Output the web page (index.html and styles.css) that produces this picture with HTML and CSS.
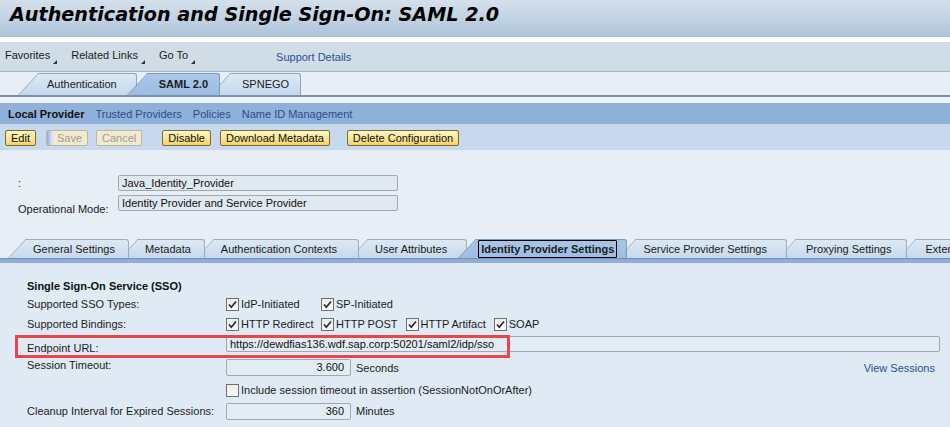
FILE: index.html
```html
<!DOCTYPE html>
<html lang="en">
<head>
<meta charset="utf-8">
<title>Authentication and Single Sign-On: SAML 2.0</title>
<link rel="stylesheet" href="styles.css">
</head>
<body>
<div class="titlebar"><h1>Authentication and Single Sign-On: SAML 2.0</h1></div>
<div class="sep"></div>
<div class="toolbar">
  <span class="menu">Favorites<i class="tri"></i></span>
  <span class="menu">Related Links<i class="tri"></i></span>
  <span class="menu">Go To<i class="tri"></i></span>
  <span class="link support">Support Details</span>
</div>
<div class="tabstrip-top">
  <div class="tab ttab first">Authentication</div>
  <div class="tab ttab sel">SAML 2.0</div>
  <div class="tab ttab">SPNEGO</div>
</div>
<div class="gap"></div>
<div class="subnav">
  <span class="cur">Local Provider</span>
  <span class="link">Trusted Providers</span>
  <span class="link">Policies</span>
  <span class="link">Name ID Management</span>
</div>
<div class="buttons">
  <span class="btn">Edit</span>
  <span class="btn dis focus m10">Save</span>
  <span class="btn dis m8">Cancel</span>
  <span class="btn m20">Disable</span>
  <span class="btn m9">Download Metadata</span>
  <span class="btn m17">Delete Configuration</span>
</div>
<div class="main">
  <div class="fields">
    <span class="flabel">:</span>
    <span class="input top">Java_Identity_Provider</span>
    <span class="flabel low">Operational Mode:</span>
    <span class="input top">Identity Provider and Service Provider</span>
  </div>
  <div class="tabstrip-inner">
    <div class="tab itab">General Settings</div>
    <div class="tab itab">Metadata</div>
    <div class="tab itab pr22">Authentication Contexts</div>
    <div class="tab itab pr20">User Attributes</div>
    <div class="tab itab sel"><span class="focusbox">Identity Provider Settings</span></div>
    <div class="tab itab pr20">Service Provider Settings</div>
    <div class="tab itab pl28">Proxying Settings</div>
    <div class="tab itab pl28">Extensions</div>
  </div>
  <div class="tabbar"></div>
  <div class="panel">
    <div class="section-title">Single Sign-On Service (SSO)</div>
    <div class="row r-types">
      <span class="label">Supported SSO Types:</span>
      <span class="chk first"><i class="box"><svg viewBox="0 0 13 13" width="13" height="13"><path d="M3 6.5 L5.3 9.2 L10 3.5" fill="none" stroke="#2b2b2b" stroke-width="1.7"/></svg></i>IdP-Initiated</span>
      <span class="chk"><i class="box"><svg viewBox="0 0 13 13" width="13" height="13"><path d="M3 6.5 L5.3 9.2 L10 3.5" fill="none" stroke="#2b2b2b" stroke-width="1.7"/></svg></i>SP-Initiated</span>
    </div>
    <div class="row r-bind">
      <span class="label">Supported Bindings:</span>
      <span class="chk first"><i class="box"><svg viewBox="0 0 13 13" width="13" height="13"><path d="M3 6.5 L5.3 9.2 L10 3.5" fill="none" stroke="#2b2b2b" stroke-width="1.7"/></svg></i>HTTP Redirect</span>
      <span class="chk"><i class="box"><svg viewBox="0 0 13 13" width="13" height="13"><path d="M3 6.5 L5.3 9.2 L10 3.5" fill="none" stroke="#2b2b2b" stroke-width="1.7"/></svg></i>HTTP POST</span>
      <span class="chk"><i class="box"><svg viewBox="0 0 13 13" width="13" height="13"><path d="M3 6.5 L5.3 9.2 L10 3.5" fill="none" stroke="#2b2b2b" stroke-width="1.7"/></svg></i>HTTP Artifact</span>
      <span class="chk"><i class="box"><svg viewBox="0 0 13 13" width="13" height="13"><path d="M3 6.5 L5.3 9.2 L10 3.5" fill="none" stroke="#2b2b2b" stroke-width="1.7"/></svg></i>SOAP</span>
    </div>
    <div class="row r-endpoint">
      <span class="label low">Endpoint URL:</span>
      <span class="input wide">https://dewdfias136.wdf.sap.corp:50201/saml2/idp/sso</span>
      <span class="highlight"></span>
    </div>
    <div class="row r-session">
      <span class="label">Session Timeout:</span>
      <span class="input num">3.600</span>
      <span class="unit">Seconds</span>
      <span class="link view">View Sessions</span>
    </div>
    <div class="row r-include">
      <span class="label"></span>
      <span class="chk"><i class="box"></i>Include session timeout in assertion (SessionNotOnOrAfter)</span>
    </div>
    <div class="row r-cleanup">
      <span class="label">Cleanup Interval for Expired Sessions:</span>
      <span class="input num">360</span>
      <span class="unit">Minutes</span>
    </div>
  </div>
</div>
</body>
</html>
```

FILE: styles.css
```css
* { box-sizing: border-box; }
html, body { margin: 0; padding: 0; }
body {
  width: 950px;
  height: 427px;
  overflow: hidden;
  background: #dfeaf5;
  font-family: "Liberation Sans", Arial, sans-serif;
  font-size: 11px;
  color: #1b1b1b;
}

.titlebar {
  height: 37px;
  background: linear-gradient(#d5e0ec, #aec4db);
  padding-left: 10px;
}
.titlebar h1 {
  margin: 0;
  font-family: "DejaVu Sans", Verdana, sans-serif;
  font-weight: bold;
  font-style: italic;
  font-size: 19.2px;
  line-height: 30px;
  color: #000;
}
.sep { height: 5px; background: #fff; }

.toolbar {
  height: 30px;
  background: #d0dde7;
  border-bottom: 1px solid #a3b3c3;
  display: flex;
  align-items: center;
  padding-left: 5px;
  padding-bottom: 3px;
}
.menu {
  display: inline-flex;
  align-items: flex-end;
  margin-right: 14px;
  color: #1b1b1b;
}
.tri {
  display: inline-block;
  width: 0; height: 0;
  border-left: 4px solid transparent;
  border-bottom: 4px solid #333;
  margin-left: 3px;
  margin-bottom: -3px;
}
.link { color: #2c4e96; }
.support { margin-left: 67px; margin-top: 4px; }

/* ---------- tabs (shared) ---------- */
.tab {
  position: relative;
  flex: none;
  white-space: nowrap;
  --bg: linear-gradient(#dce8f4, #c6d8ec);
  --bd: #8fa5bd;
}
.tab::before {
  content: "";
  position: absolute;
  left: 0; top: 0; bottom: 0;
  width: 40px;
  transform-origin: 0 100%;
  transform: skewX(-43deg);
  background: var(--bg);
  border-left: 1px solid var(--bd);
  border-top: 1px solid var(--bd);
  z-index: -1;
}
.tab::after {
  content: "";
  position: absolute;
  top: 0; bottom: 0; right: 0;
  background: var(--bg);
  border-top: 1px solid var(--bd);
  border-right: 1px solid var(--bd);
  border-top-right-radius: 3px;
  z-index: -1;
}
.tab:nth-child(1) { z-index: 9; }
.tab:nth-child(2) { z-index: 8; }
.tab:nth-child(3) { z-index: 7; }
.tab:nth-child(4) { z-index: 6; }
.tab:nth-child(5) { z-index: 5; }
.tab:nth-child(6) { z-index: 4; }
.tab:nth-child(7) { z-index: 3; }
.tab:nth-child(8) { z-index: 2; }
.tab.sel { z-index: 20; --bg: linear-gradient(#abc7e8, #9cbce2); --bd: #7f9bbd; font-weight: bold; }

/* top tab strip */
.tabstrip-top {
  height: 25px;
  background: #e8eef5;
  border-bottom: 2px solid #7d91a9;
  display: flex;
  align-items: flex-end;
  padding-left: 18px;
}
.ttab {
  height: 22px;
  line-height: 23px;
  padding: 0 12px 0 32px;
  margin-left: -10px;
}
.ttab::after { left: 20px; }
.ttab.first { margin-left: 0; padding: 0 20px 0 29px; }

.gap { height: 6px; background: #eef3f8; }

.subnav {
  height: 21px;
  background: #8fb0d8;
  display: flex;
  align-items: center;
  padding-left: 8px;
  gap: 11px;
}
.subnav .cur { font-weight: bold; color: #111; }
.subnav .link { color: #2d4c8c; }

.buttons {
  height: 26px;
  background: #c9d9ed;
  display: flex;
  align-items: flex-start;
  padding: 6px 0 0 5px;
}
.btn {
  height: 16px;
  line-height: 14px;
  padding: 0 5px;
  border: 1px solid #7d6b2c;
  border-radius: 2px;
  background: linear-gradient(#fff6c8, #f6d46a);
  color: #111;
}
.btn.dis {
  background: #f0ead2;
  border-color: #bdb79e;
  color: #a39d8b;
}
.btn.focus {
  padding-left: 10px;
  background: linear-gradient(to right, #8fb0dc, #dce6ef 5px, #f0ead2 7px);
}
.m8 { margin-left: 8px; }
.m9 { margin-left: 9px; }
.m10 { margin-left: 10px; }
.m17 { margin-left: 17px; }
.m20 { margin-left: 20px; }

.main { background: #e8eef5; padding-top: 25px; }

.fields {
  display: grid;
  grid-template-columns: 100px 280px;
  grid-template-rows: 16px 20px;
  row-gap: 4px;
  padding-left: 18px;
}
.flabel { align-self: center; }
.flabel.low { align-self: end; }
.input {
  display: block;
  height: 16px;
  line-height: 14px;
  border: 1px solid #9ea9b5;
  border-radius: 2px;
  background: #e3ecf5;
  padding: 0 3px;
  white-space: nowrap;
  overflow: hidden;
  color: #111;
}
.input.top { background: #e0e8f0; align-self: start; }

/* inner tab strip */
.tabstrip-inner {
  margin-top: 24px;
  height: 19px;
  display: flex;
  align-items: flex-end;
  padding-left: 8px;
  overflow: hidden;
}
.itab {
  height: 19px;
  line-height: 20px;
  padding: 0 14px 0 25px;
  margin-left: -9px;
  --bg: linear-gradient(#dde8f4, #c7d9ec);
  --bd: #9aaec4;
}
.itab:first-child { margin-left: 0; }
.itab::after { left: 18px; }
.itab.pr22 { padding-right: 22px; }
.itab.pr20 { padding-right: 20px; }
.itab.pl28 { padding-left: 28px; padding-right: 15px; }
.itab.sel { padding: 0 10px 0 20px; --bg: linear-gradient(#a8c5e6, #9ebde1); }
.focusbox {
  display: inline-block;
  height: 18px;
  line-height: 16px;
  margin-top: 1px;
  border: 1px solid #000;
  border-radius: 1px;
  padding: 0 2px;
  vertical-align: top;
}
.tabbar {
  height: 5px;
  background: #8eaed6;
  border-top: 1px solid #7191bb;
}

/* panel */
.panel {
  background: #dfeaf5;
  padding: 16px 10px 0 27px;
  height: 165px;
}
.section-title { font-weight: bold; height: 14px; line-height: 14px; color: #111; }
.row { display: flex; align-items: center; position: relative; }
.label { width: 199px; flex: none; color: #222; }
.r-types { margin-top: 2px; height: 18px; }
.r-bind { margin-top: 2px; height: 18px; }
.r-endpoint { margin-top: 2px; height: 18px; }
.r-endpoint .label.low { align-self: flex-start; padding-top: 7px; }
.r-session { margin-top: 5px; height: 19px; }
.r-session .label { align-self: flex-start; padding-top: 1px; }
.r-include { margin-top: 5px; height: 16px; }
.r-cleanup { margin-top: 4px; height: 18px; }

.chk { display: inline-flex; align-items: center; margin-right: 8px; color: #1b1b1b; }
.chk.first { width: 95px; margin-right: 0; }
.box {
  display: inline-block;
  width: 13px; height: 13px;
  border: 1px solid #707070;
  background: linear-gradient(#ededed, #fbfbfb);
  margin-right: 2px;
  position: relative;
}
.box svg { position: absolute; left: -1px; top: -1px; }

.input.wide { flex: 1; height: 16px; }
.input.num { width: 125px; height: 17px; line-height: 15px; text-align: right; padding-right: 6px; }
.unit { margin-left: 5px; }
.view { margin-left: auto; margin-right: 5px; }

.highlight {
  position: absolute;
  left: -12px;
  top: 0;
  width: 495px;
  height: 23px;
  border: 3px solid #e8464a;
  pointer-events: none;
}
```
